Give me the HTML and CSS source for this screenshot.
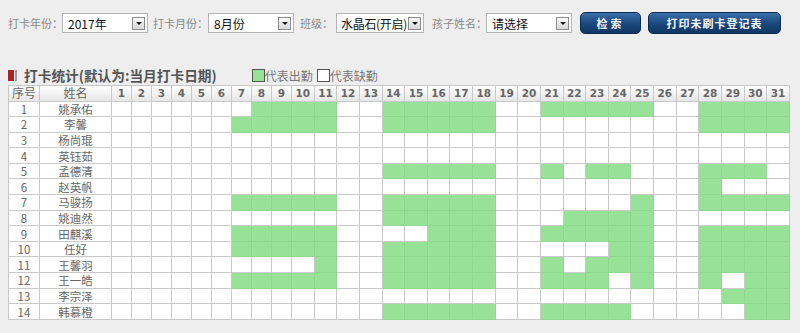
FILE: index.html
```html
<!DOCTYPE html>
<html lang="zh-CN">

<head>
    <meta charset="UTF-8">
    <meta name="viewport" content="width=device-width, initial-scale=1.0">
    <title>打卡统计</title>
    <link rel="stylesheet" href="styles.css">
</head>

<body>
    <div class="toolbar">
        <span class="lbl lblYear">打卡年份：</span>
        <div class="sel selYear"><span>2017年</span><i class="arrow"></i></div>
        <span class="lbl lblMonth">打卡月份：</span>
        <div class="sel selMonth"><span>8月份</span><i class="arrow"></i></div>
        <span class="lbl lblClass">班级：</span>
        <div class="sel selClass"><span>水晶石(开启)</span><i class="arrow"></i></div>
        <span class="lbl lblKid">孩子姓名：</span>
        <div class="sel selKid"><span>请选择</span><i class="arrow"></i></div>
        <button class="btn btnSearch">检索</button>
        <button class="btn btnPrint">打印未刷卡登记表</button>
    </div>

    <div class="titleRow">
        <span class="mark"><i class="markRed"></i><i class="markGray"></i></span>
        <h3 class="title">打卡统计(默认为:当月打卡日期)</h3>
        <span class="legend"><i class="box boxOn"></i>代表出勤</span>
        <span class="legend"><i class="box"></i>代表缺勤</span>
    </div>

    <table class="grid" id="grid">
        <colgroup id="cols">
            <col class="colNo">
            <col class="colName">
        </colgroup>
        <thead>
            <tr id="head">
                <th>序号</th>
                <th>姓名</th>
            </tr>
        </thead>
        <tbody id="body"></tbody>
    </table>

    <script>
        var names = ["姚承佑", "李馨", "杨尚琨", "英钰茹", "孟德清", "赵英帆", "马骏扬",
            "姚迪然", "田麒溪", "任好", "王馨羽", "王一皓", "李宗泽", "韩慕橙"];
        // d7 | d8-11 | d14-18 | d21-25 | d28-31, other days empty
        var marks = [
            ["0", "1111", "11111", "11111", "1111"],
            ["1", "1111", "11111", "00000", "1111"],
            ["0", "0000", "00000", "00000", "0000"],
            ["0", "0000", "00000", "00000", "0000"],
            ["0", "0000", "11111", "10110", "1110"],
            ["0", "0000", "00000", "00000", "1000"],
            ["1", "1111", "11111", "00001", "1111"],
            ["0", "0000", "11111", "01111", "0000"],
            ["1", "1111", "00111", "11111", "1111"],
            ["1", "1111", "11111", "00011", "1111"],
            ["0", "0001", "11111", "10111", "1111"],
            ["1", "1111", "11111", "11101", "1011"],
            ["0", "0000", "00000", "00000", "0111"],
            ["0", "0000", "11111", "11110", "0011"]
        ];

        var cols = document.getElementById("cols");
        var head = document.getElementById("head");
        var body = document.getElementById("body");

        for (var d = 1; d <= 31; d++) {
            var col = document.createElement("col");
            if (d < 10) col.className = "colDay";
            cols.appendChild(col);
            var th = document.createElement("th");
            th.className = "day";
            th.innerText = d;
            head.appendChild(th);
        }

        for (var i = 0; i < names.length; i++) {
            var m = marks[i];
            var line = "000000" + m[0] + m[1] + "00" + m[2] + "00" + m[3] + "00" + m[4];
            var html = "<td>" + (i + 1) + "</td><td>" + names[i] + "</td>";
            for (var j = 0; j < line.length; j++) {
                html += line[j] == "1" ? '<td class="on"></td>' : "<td></td>";
            }
            var tr = document.createElement("tr");
            tr.innerHTML = html;
            body.appendChild(tr);
        }
    </script>
</body>

</html>
```

FILE: styles.css
```css
body {
    margin: 0;
    background-color: #eeeeee;
    font-family: "Noto Sans CJK SC", "Liberation Sans", sans-serif;
    color: #666;
}

/* top filter bar */
.toolbar {
    display: flex;
    align-items: center;
    height: 22px;
    padding: 12px 0 0 8px;
}

.lbl {
    font-size: 11px;
    color: #8a8a8a;
    white-space: nowrap;
}

.lblYear {
    width: 54px;
}

.lblMonth {
    width: 55px;
    margin-left: 5px;
}

.lblClass {
    width: 36px;
    margin-left: 6px;
}

.lblKid {
    width: 54px;
    margin-left: 8px;
}

.sel {
    box-sizing: border-box;
    height: 20px;
    width: 86px;
    background-color: white;
    border: 1px solid #b5b5b5;
    display: flex;
    align-items: center;
    justify-content: space-between;
    padding: 0 2px 0 5px;
    font-size: 12px;
    color: #111;
    white-space: nowrap;
}

.selClass {
    width: 88px;
    padding-left: 4px;
}

.selClass span {
    letter-spacing: -0.3px;
}

.arrow {
    box-sizing: border-box;
    flex: none;
    width: 13px;
    height: 13px;
    border: 1px solid #8c8c8c;
    background: linear-gradient(#fafafa, #d8d8d8);
    position: relative;
}

.arrow::after {
    content: "";
    position: absolute;
    left: 3px;
    top: 4px;
    border-left: 3px solid transparent;
    border-right: 3px solid transparent;
    border-top: 3px solid #111;
}

.btn {
    box-sizing: border-box;
    height: 22px;
    margin-left: 8px;
    border: 1px solid #0c2c52;
    border-radius: 5px;
    background: linear-gradient(#3a6ea6, #1c4a80 50%, #0f3563);
    color: #f4f6fa;
    font-family: "Noto Sans CJK SC", sans-serif;
    font-size: 11px;
    font-weight: bold;
    letter-spacing: 1px;
    padding: 0;
}

.btnSearch {
    width: 61px;
    letter-spacing: 3px;
}

.btnPrint {
    width: 133px;
    margin-left: 7px;
}

/* section title */
.titleRow {
    display: flex;
    align-items: center;
    height: 20px;
    margin: 31px 0 0 8px;
}

.mark {
    display: flex;
    align-items: center;
    gap: 1px;
    margin-right: 7px;
}

.markRed {
    width: 6px;
    height: 11px;
    background-color: #a6232a;
}

.markGray {
    width: 2px;
    height: 11px;
    background-color: #9a9a9a;
}

.title {
    margin: 0;
    font-size: 13.7px;
    font-weight: bold;
    color: #555;
}

.legend {
    display: flex;
    align-items: center;
    font-size: 12px;
    color: #777;
    margin-left: 35px;
}

.legend + .legend {
    margin-left: 4px;
}

.box {
    box-sizing: border-box;
    width: 13px;
    height: 13px;
    border: 1px solid #555;
    background-color: white;
}

.boxOn {
    background-color: #98e298;
}

/* attendance grid */
.grid {
    width: 782px;
    margin: 0 0 0 8px;
    table-layout: fixed;
    border-collapse: separate;
    border-spacing: 0;
    border-top: 1px solid #c6c6c6;
    border-left: 1px solid #c6c6c6;
}

.colNo {
    width: 31px;
}

.colName {
    width: 72px;
}

.colDay {
    width: 20px;
}

.grid th,
.grid td {
    padding: 0;
    border-right: 1px solid #c9c9c9;
    border-bottom: 1px solid #c9c9c9;
    text-align: center;
    line-height: 14px;
    white-space: nowrap;
}

.grid th {
    height: 14.5px;
    background: linear-gradient(#ffffff, #e6e6e6);
    font-size: 12px;
    font-weight: normal;
    color: #666;
}

.grid th.day {
    font-family: "DejaVu Sans", sans-serif;
    font-size: 10.5px;
    font-weight: bold;
}

.grid td {
    height: 14.6px;
    background-color: white;
    font-size: 11.5px;
    color: #666;
}

.grid td.on {
    background-color: #98e298;
    border-right-color: #8fd68f;
    border-bottom-color: #8fd68f;
}
```
